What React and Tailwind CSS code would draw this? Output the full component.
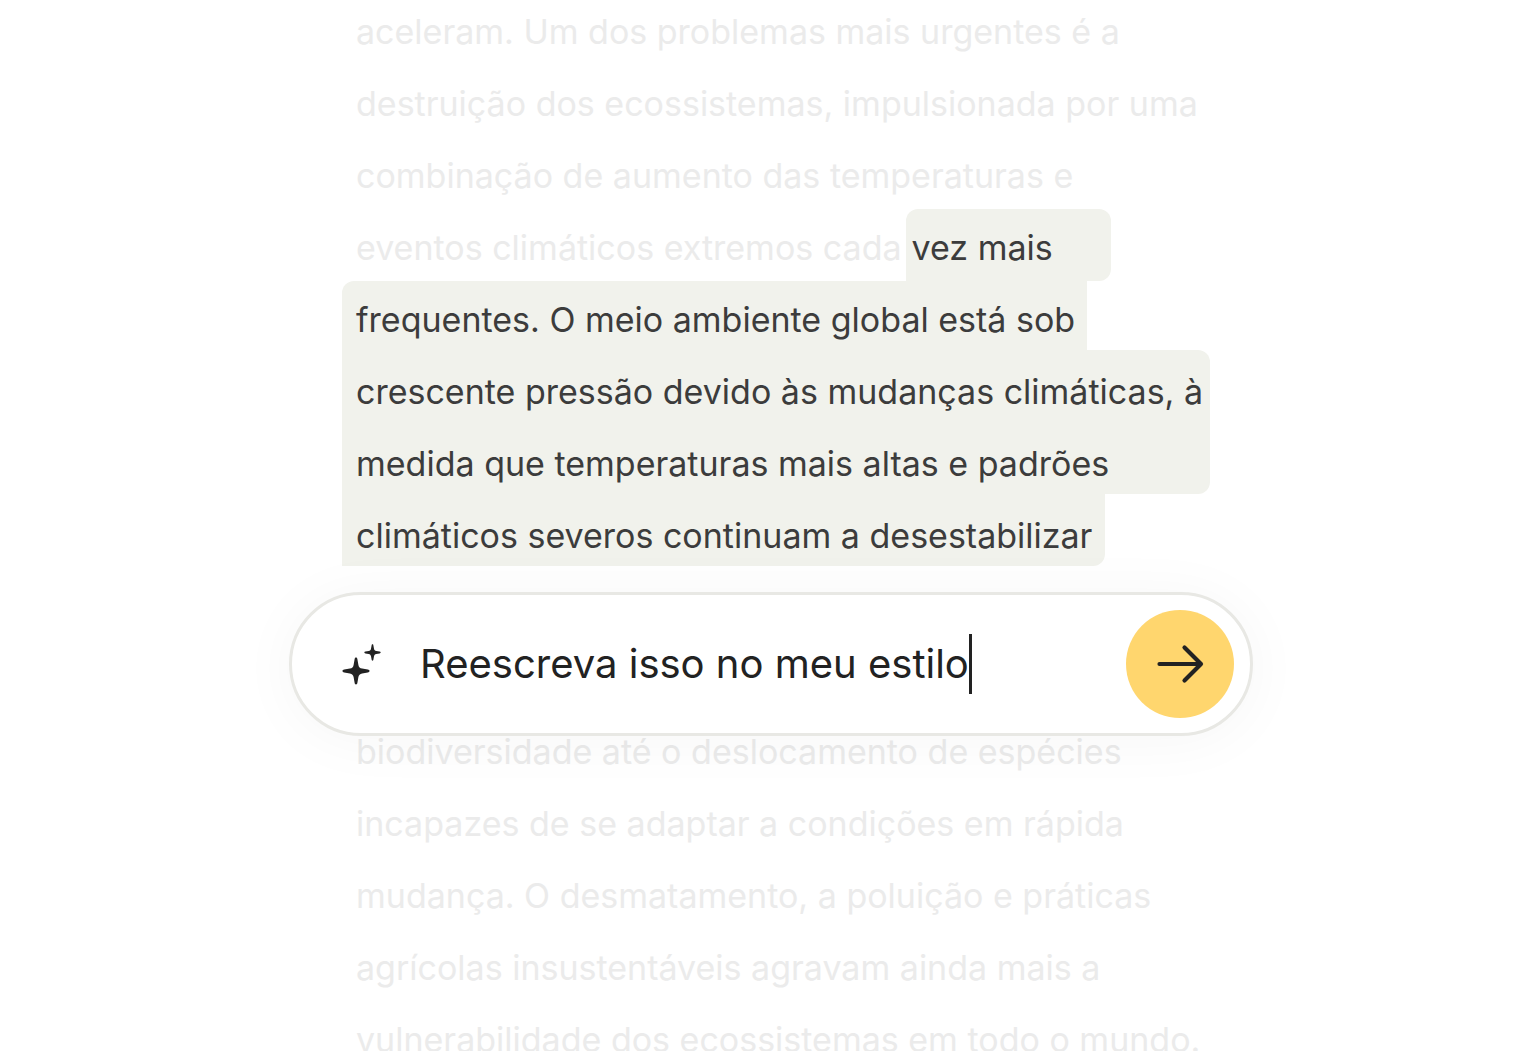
import { useState } from 'react'

const BEFORE = [
  'aceleram. Um dos problemas mais urgentes é a',
  'destruição dos ecossistemas, impulsionada por uma',
  'combinação de aumento das temperaturas e',
]

const AFTER = [
  'biodiversidade até o deslocamento de espécies',
  'incapazes de se adaptar a condições em rápida',
  'mudança. O desmatamento, a poluição e práticas',
  'agrícolas insustentáveis agravam ainda mais a',
  'vulnerabilidade dos ecossistemas em todo o mundo.',
]

function Line({ children, className = '' }) {
  return <span className={`block h-18 whitespace-nowrap ${className}`}>{children}</span>
}

function Sparkles() {
  return (
    <svg viewBox="0 0 40 42" className="w-10 h-[42px] shrink-0" fill="#222" aria-hidden="true">
      <path d="M14 14.500c.9 0 1.200.7 1.400 1.700l1 5.700c.4 2.200 1.500 3.300 3.700 3.700l5.700 1c1 .2 1.700.6 1.700 1.400s-.7 1.200-1.700 1.400l-5.700 1c-2.200.4-3.300 1.500-3.700 3.700l-1 5.700c-.2 1-.5 1.700-1.400 1.700s-1.200-.7-1.400-1.700l-1-5.700c-.4-2.200-1.500-3.300-3.700-3.700l-5.700-1C1.200 29.200.500 28.800.500 28s.7-1.200 1.700-1.400l5.700-1c2.200-.4 3.300-1.500 3.700-3.700l1-5.700c.2-1 .5-1.700 1.400-1.700z" />
      <path d="M30.500 1.300c.6 0 .8.500.9 1.100l.6 3.300c.3 1.400.9 2 2.300 2.300l3.300.6c.6.1 1.100.4 1.100.9s-.5.8-1.100.9l-3.300.6c-1.400.3-2 .9-2.300 2.300l-.6 3.300c-.1.600-.3 1.100-.9 1.100s-.8-.5-.9-1.100l-.6-3.300c-.3-1.400-.9-2-2.300-2.300l-3.300-.6c-.6-.1-1.100-.4-1.100-.9s.5-.8 1.100-.9l3.300-.6c1.400-.3 2-.9 2.300-2.300l.6-3.300c.1-.6.300-1.100.9-1.100z" />
    </svg>
  )
}

function Arrow() {
  return (
    <svg viewBox="0 0 48 40" className="w-12 h-10" fill="none" stroke="#222" strokeWidth="4.200" strokeLinecap="round" strokeLinejoin="round" aria-hidden="true">
      <path d="M3.500 20H45M28.500 3.500 45 20 28.500 36.500" />
    </svg>
  )
}

function PromptBar() {
  const [prompt, setPrompt] = useState('Reescreva isso no meu estilo')

  return (
    <form
      onSubmit={e => e.preventDefault()}
      className="relative flex items-center h-36 pl-[50px] pr-4 bg-white border-3 border-[#e8e8e4] rounded-full shadow-[0_4px_60px_rgba(0,0,0,0.04)]"
    >
      <Sparkles />
      <input
        aria-label="Instrução"
        value={prompt}
        onChange={e => setPrompt(e.target.value)}
        className="ml-[38px] field-sizing-content bg-transparent text-[40px] leading-[60px] text-[#222] caret-transparent outline-none"
      />
      <span className="w-[3px] h-15 bg-[#222]" />
      <button type="submit" aria-label="Enviar" className="ml-auto size-27 shrink-0 rounded-full bg-[#ffd66e] flex items-center justify-center">
        <Arrow />
      </button>
    </form>
  )
}

export default function App() {
  return (
    <main className="h-screen overflow-hidden bg-white pl-1.5 font-['Inter',sans-serif]">
      <div className="mx-auto max-w-[964px] -mt-[7px]">
        <p className="pl-[67px] text-[34px] leading-[78px] text-[#ebebeb]">
          {BEFORE.map(text => <Line key={text}>{text}</Line>)}
          <Line className="flex">
            eventos climáticos extremos cada
            <mark className="ml-1 w-[205px] pl-1.5 rounded-t-xl rounded-br-xl bg-[#f1f2ec] text-[#3c3c3c]">vez mais</mark>
          </Line>
        </p>

        {/* the wide block starts 3px early, so its text is padded back down */}
        <p className="ml-[53px] text-[34px] leading-[78px] text-[#3c3c3c]">
          <Line className="w-[745px] pl-3.5 rounded-tl-xl bg-[#f1f2ec]">frequentes. O meio ambiente global está sob</Line>
          <span className="block w-[868px] h-36 -mt-[3px] pt-[3px] pl-3.5 rounded-r-xl bg-[#f1f2ec]">
            <Line>crescente pressão devido às mudanças climáticas, à</Line>
            <Line>medida que temperaturas mais altas e padrões</Line>
          </span>
          <Line className="w-[763px] pt-[3px] pl-3.5 rounded-br-xl bg-[#f1f2ec]">climáticos severos continuam a desestabilizar</Line>
        </p>

        <div className="mt-[26px]">
          <PromptBar />
        </div>

        <p className="-mt-[23px] pl-[67px] text-[34px] leading-[78px] text-[#ebebeb]">
          {AFTER.map(text => <Line key={text}>{text}</Line>)}
        </p>
      </div>
    </main>
  )
}
